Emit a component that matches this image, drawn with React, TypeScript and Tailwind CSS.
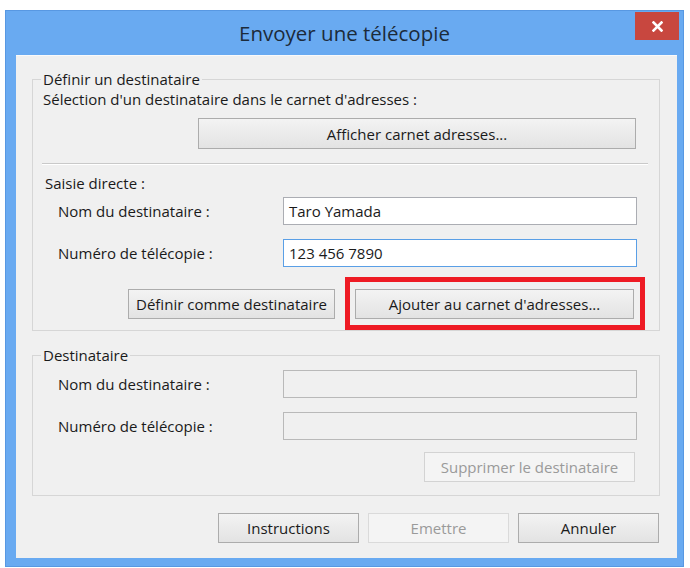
const btn =
  "h-[30px] flex items-center justify-center border border-[#acacac] bg-linear-to-b from-[#f3f3f3] to-[#e3e3e3] text-[#1a1a1a]";
const btnOff =
  "h-[30px] flex items-center justify-center border border-[#d3d3d3] bg-[#f4f4f4] text-[#9a9a9a]";

const Field = ({ label, value, focused, disabled, top }: { label: string; value?: string; focused?: boolean; disabled?: boolean; top: string }) => (
  <div className={`flex items-center pl-[25px] ${top}`}>
    <span className="w-[225px]">{label}</span>
    <div
      className={`w-[354px] h-[28px] flex items-center px-[5px] border ${
        disabled
          ? "bg-[#f0f0f0] border-[#b9b9b9]"
          : focused
          ? "bg-white border-[#5a9fe6]"
          : "bg-white border-[#abadb3]"
      }`}
    >
      {value}
    </div>
  </div>
);

export default function App() {
  return (
    <div className="w-[690px] h-[568px] bg-white pl-[5px] pt-[10px] text-[15px] leading-[16px] text-[#1a1a1a] font-['Open_Sans',Arial,sans-serif]">
      <div className="w-[679px] h-[557px] flex flex-col bg-[#69aaf1] border border-[#5898e2]">
        {/* title bar */}
        <div className="relative h-[44px] flex items-center justify-center">
          <span className="text-[20.5px] leading-[26px] text-[#1c2b3a] mt-[-1px]">Envoyer une télécopie</span>
          <div className="absolute right-[4px] top-[1px] w-[44px] h-[28px] bg-[#c8473f] flex items-center justify-center">
            <svg width="11" height="11" viewBox="0 0 11 11">
              <path d="M1.5 1.5 L9.5 9.5 M9.5 1.5 L1.5 9.5" stroke="white" strokeWidth="2.6" strokeLinecap="square" />
            </svg>
          </div>
        </div>

        {/* body */}
        <div className="flex-1 ml-[10px] mr-[6px] mb-[8px] bg-[#f0f0f0] border-t border-[#fafafa] flex flex-col">
          <fieldset className="ml-[16px] mr-[17px] mt-[15px] border border-[#d6d6d6] pb-0">
            <legend className="ml-[8px] px-[2px]">Définir un destinataire</legend>
            <div className="pl-[10px] mt-[4px]">Sélection d'un destinataire dans le carnet d'adresses :</div>
            <div className="flex justify-end mr-[23px] mt-[11px]">
              <div className={`${btn} w-[438px] h-[31px]`}>Afficher carnet adresses...</div>
            </div>
            <div className="ml-[9px] mr-[11px] mt-[14px] h-[2px] border-t border-[#c9c9c9] border-b border-b-white" />
            <div className="pl-[12px] mt-[10px]">Saisie directe :</div>
            <Field label="Nom du destinataire :" value="Taro Yamada" top="mt-[6px]" />
            <Field label="Numéro de télécopie :" value="123 456 7890" focused top="mt-[14px]" />
            <div className="flex items-center mt-[10px] h-[53px]">
              <div className={`${btn} w-[207px] ml-[95px]`}>Définir comme destinataire</div>
              <div className="ml-[10px] w-[300px] h-[53px] border-[5px] border-[#ee1b24] pl-[5px] pr-[6px] pt-[7px]">
                <div className={`${btn} w-full`}>Ajouter au carnet d'adresses...</div>
              </div>
            </div>
          </fieldset>

          <fieldset className="ml-[16px] mr-[17px] mt-[16px] border border-[#d6d6d6]">
            <legend className="ml-[8px] px-[2px]">Destinataire</legend>
            <Field label="Nom du destinataire :" disabled top="mt-[7px]" />
            <Field label="Numéro de télécopie :" disabled top="mt-[14px]" />
            <div className="flex justify-end mr-[24px] mt-[12px] mb-[13px]">
              <div className={`${btnOff} w-[211px]`}>Supprimer le destinataire</div>
            </div>
          </fieldset>

          <div className="flex justify-end gap-[9px] mr-[18px] mt-[17px]">
            <div className={`${btn} w-[141px]`}>Instructions</div>
            <div className={`${btnOff} w-[141px] border-[#dadada]`}>Emettre</div>
            <div className={`${btn} w-[141px]`}>Annuler</div>
          </div>
        </div>
      </div>
    </div>
  );
}
